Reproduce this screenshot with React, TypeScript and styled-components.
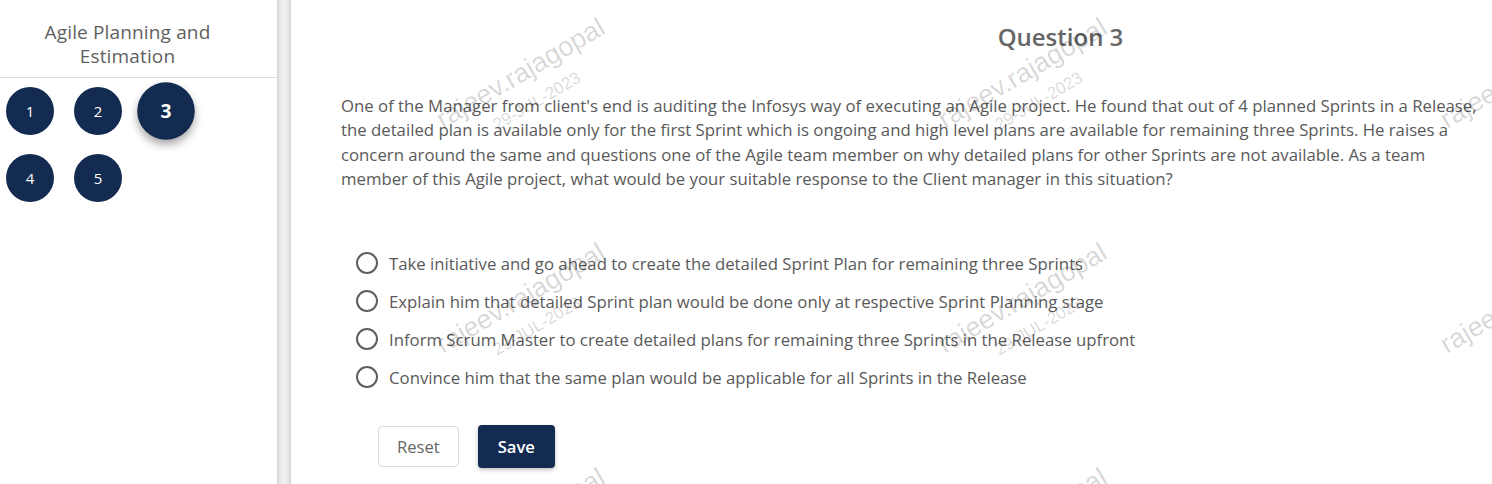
import React from "react";
import styled, { createGlobalStyle } from "styled-components";

const GlobalStyle = createGlobalStyle`
  html, body { margin: 0; padding: 0; background: #ffffff; }
  body { font-family: "Open Sans", "Noto Sans", sans-serif; }
  * { box-sizing: border-box; }
`;

const NAVY = "#132b50";

const Page = styled.div`
  position: relative;
  display: flex;
  width: 1492px;
  height: 484px;
  overflow: hidden;
  background: #ffffff;
`;

const Sidebar = styled.aside`
  width: 277px;
  flex-shrink: 0;
  display: flex;
  flex-direction: column;
  background: #ffffff;
`;

const SideTitle = styled.div`
  padding: 20px 22px 9px 0;
  text-align: center;
  font-size: 19px;
  letter-spacing: 0.15px;
  line-height: 24px;
  color: #5f5f5f;
  border-bottom: 1px solid #dedede;
`;

const Bubbles = styled.div`
  display: grid;
  grid-template-columns: repeat(3, 48px);
  column-gap: 20px;
  row-gap: 19px;
  padding: 9px 0 0 6px;
`;

const Bubble = styled.button<{ $active?: boolean }>`
  width: 48px;
  height: 48px;
  border-radius: 50%;
  border: none;
  padding: 0;
  background: ${NAVY};
  color: #ffffff;
  font-family: "Open Sans", sans-serif;
  font-size: ${(p) => (p.$active ? "16px" : "15px")};
  font-weight: ${(p) => (p.$active ? 700 : 400)};
  display: flex;
  align-items: center;
  justify-content: center;
  transform: ${(p) => (p.$active ? "scale(1.2)" : "none")};
  box-shadow: ${(p) => (p.$active ? "0 4px 7px rgba(0,0,0,0.35)" : "none")};
  cursor: pointer;
`;

const Divider = styled.div`
  width: 14px;
  flex-shrink: 0;
  background: linear-gradient(
    to right,
    #d4d4d4 0%,
    #e6e6e6 20%,
    #f1f1f1 50%,
    #e6e6e6 80%,
    #d4d4d4 100%
  );
`;

const Main = styled.main`
  flex: 1;
  padding: 21px 6px 0 50px;
  display: flex;
  flex-direction: column;
`;

const Heading = styled.h2`
  margin: 0;
  padding-left: 294px;
  text-align: center;
  font-size: 24px;
  line-height: 32px;
  font-weight: 600;
  color: #666666;
`;

const QuestionText = styled.p`
  margin: 41px 0 0 0;
  font-size: 16.75px;
  line-height: 24.4px;
  color: #595959;
`;

const Options = styled.div`
  margin-top: 53px;
  padding-left: 15px;
  display: flex;
  flex-direction: column;
`;

const Option = styled.label`
  display: flex;
  align-items: center;
  gap: 11px;
  padding: 7px 0;
  font-size: 16.75px;
  line-height: 24px;
  color: #595959;
  cursor: pointer;
`;

const Radio = styled.span`
  width: 22px;
  height: 22px;
  border-radius: 50%;
  border: 2px solid #5e5e5e;
  flex-shrink: 0;
  margin-top: -1px;
`;

const Actions = styled.div`
  margin-top: 28px;
  padding-left: 37px;
  display: flex;
  align-items: center;
  gap: 19px;
`;

const Button = styled.button<{ $primary?: boolean }>`
  font-family: "Open Sans", sans-serif;
  font-size: 16.6px;
  height: ${(p) => (p.$primary ? "43px" : "41px")};
  padding: 0 ${(p) => (p.$primary ? "20px" : "18px")};
  border-radius: 4px;
  border: ${(p) => (p.$primary ? "none" : "1px solid #dcdcdc")};
  background: ${(p) => (p.$primary ? NAVY : "#ffffff")};
  color: ${(p) => (p.$primary ? "#ffffff" : "#666666")};
  font-weight: ${(p) => (p.$primary ? 600 : 400)};
  box-shadow: ${(p) => (p.$primary ? "0 2px 4px rgba(0,0,0,0.25)" : "none")};
  cursor: pointer;
`;

const Overlay = styled.div`
  position: absolute;
  inset: 0;
  pointer-events: none;
  overflow: hidden;
`;

const Watermark = styled.div`
  position: absolute;
  width: 240px;
  height: 60px;
  display: flex;
  flex-direction: column;
  align-items: center;
  transform: rotate(-30.5deg);
  font-family: "Liberation Sans", Arial, sans-serif;
  color: rgba(0, 0, 0, 0.16);
  white-space: nowrap;
`;

const WmName = styled.span`
  font-size: 27px;
  line-height: 30px;
`;

const WmDate = styled.span`
  margin-top: 8px;
  font-size: 17px;
  line-height: 20px;
`;

const options = [
  "Take initiative and go ahead to create the detailed Sprint Plan for remaining three Sprints",
  "Explain him that detailed Sprint plan would be done only at respective Sprint Planning stage",
  "Inform Scrum Master to create detailed plans for remaining three Sprints in the Release upfront",
  "Convince him that the same plan would be applicable for all Sprints in the Release",
];

const marks: { x: number; y: number }[] = [];
for (let j = 0; j < 3; j++) {
  for (let i = 0; i < 3; i++) {
    marks.push({ x: 528 + 502 * i, y: 86 + 225 * j });
  }
}

export default function App() {
  return (
    <>
      <GlobalStyle />
      <Page>
        <Sidebar>
          <SideTitle>
            Agile Planning and
            <br />
            Estimation
          </SideTitle>
          <Bubbles>
            {[1, 2, 3, 4, 5].map((n) => (
              <Bubble key={n} $active={n === 3}>
                {n}
              </Bubble>
            ))}
          </Bubbles>
        </Sidebar>
        <Divider />
        <Main>
          <Heading>Question 3</Heading>
          <QuestionText>
            One of the Manager from client's end is auditing the Infosys way of executing an Agile
            project. He found that out of 4 planned Sprints in a Release, the detailed plan is
            available only for the first Sprint which is ongoing and high level plans are available
            for remaining three Sprints. He raises a concern around the same and questions one of the
            Agile team member on why detailed plans for other Sprints are not available. As a team
            member of this Agile project, what would be your suitable response to the Client manager
            in this situation?
          </QuestionText>
          <Options>
            {options.map((o) => (
              <Option key={o}>
                <Radio />
                {o}
              </Option>
            ))}
          </Options>
          <Actions>
            <Button>Reset</Button>
            <Button $primary>Save</Button>
          </Actions>
        </Main>
        <Overlay>
          {marks.map((m, k) => (
            <Watermark key={k} style={{ left: m.x - 120, top: m.y - 30 }}>
              <WmName>rajeev.rajagopal</WmName>
              <WmDate>29-JUL-2023</WmDate>
            </Watermark>
          ))}
        </Overlay>
      </Page>
    </>
  );
}
